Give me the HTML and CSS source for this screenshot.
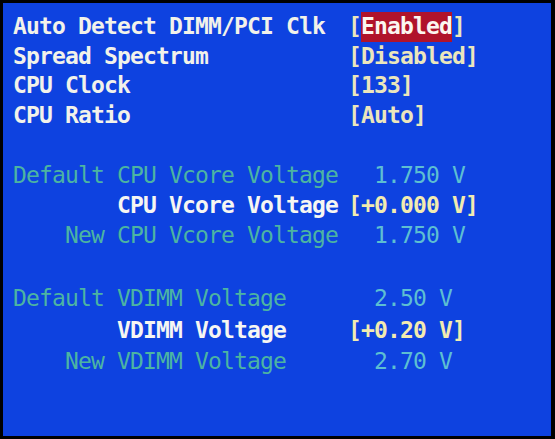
FILE: index.html
```html
<!DOCTYPE html>
<html lang="en">
<head>
  <meta charset="UTF-8">
  <title>BIOS - Frequency/Voltage Control</title>
  <link rel="stylesheet" href="styles.css">
</head>
<body>
  <div class="screen">

    <div class="group top">
      <div class="row"><span class="label">Auto Detect DIMM/PCI Clk</span><span class="value">[<span class="sel">Enabled</span>]</span></div>
      <div class="row"><span class="label">Spread Spectrum</span><span class="value">[Disabled]</span></div>
      <div class="row"><span class="label">CPU Clock</span><span class="value">[133]</span></div>
      <div class="row"><span class="label">CPU Ratio</span><span class="value">[Auto]</span></div>
    </div>

    <div class="group vcore">
      <div class="row info"><span class="label">Default CPU Vcore Voltage</span><span class="value num">1.750 V</span></div>
      <div class="row edit"><span class="label ind8">CPU Vcore Voltage</span><span class="value">[+0.000 V]</span></div>
      <div class="row info"><span class="label ind4">New CPU Vcore Voltage</span><span class="value num">1.750 V</span></div>
    </div>

    <div class="group vdimm">
      <div class="row info"><span class="label">Default VDIMM Voltage</span><span class="value num">2.50 V</span></div>
      <div class="row edit"><span class="label ind8">VDIMM Voltage</span><span class="value">[+0.20 V]</span></div>
      <div class="row info"><span class="label ind4">New VDIMM Voltage</span><span class="value num">2.70 V</span></div>
    </div>

  </div>
</body>
</html>
```
FILE: styles.css
```css
* { box-sizing: border-box; }

html, body {
  margin: 0;
  background: #000;
}

/* one text cell = 13px */
.screen {
  width: 548px;
  height: 433px;
  margin: 3px 0 0 3px;
  padding: 9px 0 0 10px;
  background: #0e42e0;
  font-family: "DejaVu Sans Mono", "Liberation Mono", monospace;
  font-size: 23px;
  letter-spacing: -0.85px;
}

.row {
  display: grid;
  grid-template-columns: 335px 1fr;
}

.label, .value { white-space: pre; }

.top .row { line-height: 29.5px; }
.vcore { margin-top: 30px; }
.vcore .row { line-height: 30px; }
.vdimm { margin-top: 33px; }
.vdimm .row { line-height: 31.5px; }

.top .label {
  color: #f2f2ea;
  font-weight: bold;
}

.top .value {
  color: #ebe6bc;
  font-weight: bold;
}

.sel {
  display: inline-block;
  background: #b0132b;
  color: #fbf6f0;
}

.info .label { color: #4cb4a2; }
.info .value { color: #5dbfd2; }

.edit .label {
  color: #f6f6f2;
  font-weight: bold;
}

.edit .value {
  color: #f2ebb0;
  font-weight: bold;
}

.num { padding-left: 26px; }
.ind4 { padding-left: 52px; }
.ind8 { padding-left: 104px; }
```
